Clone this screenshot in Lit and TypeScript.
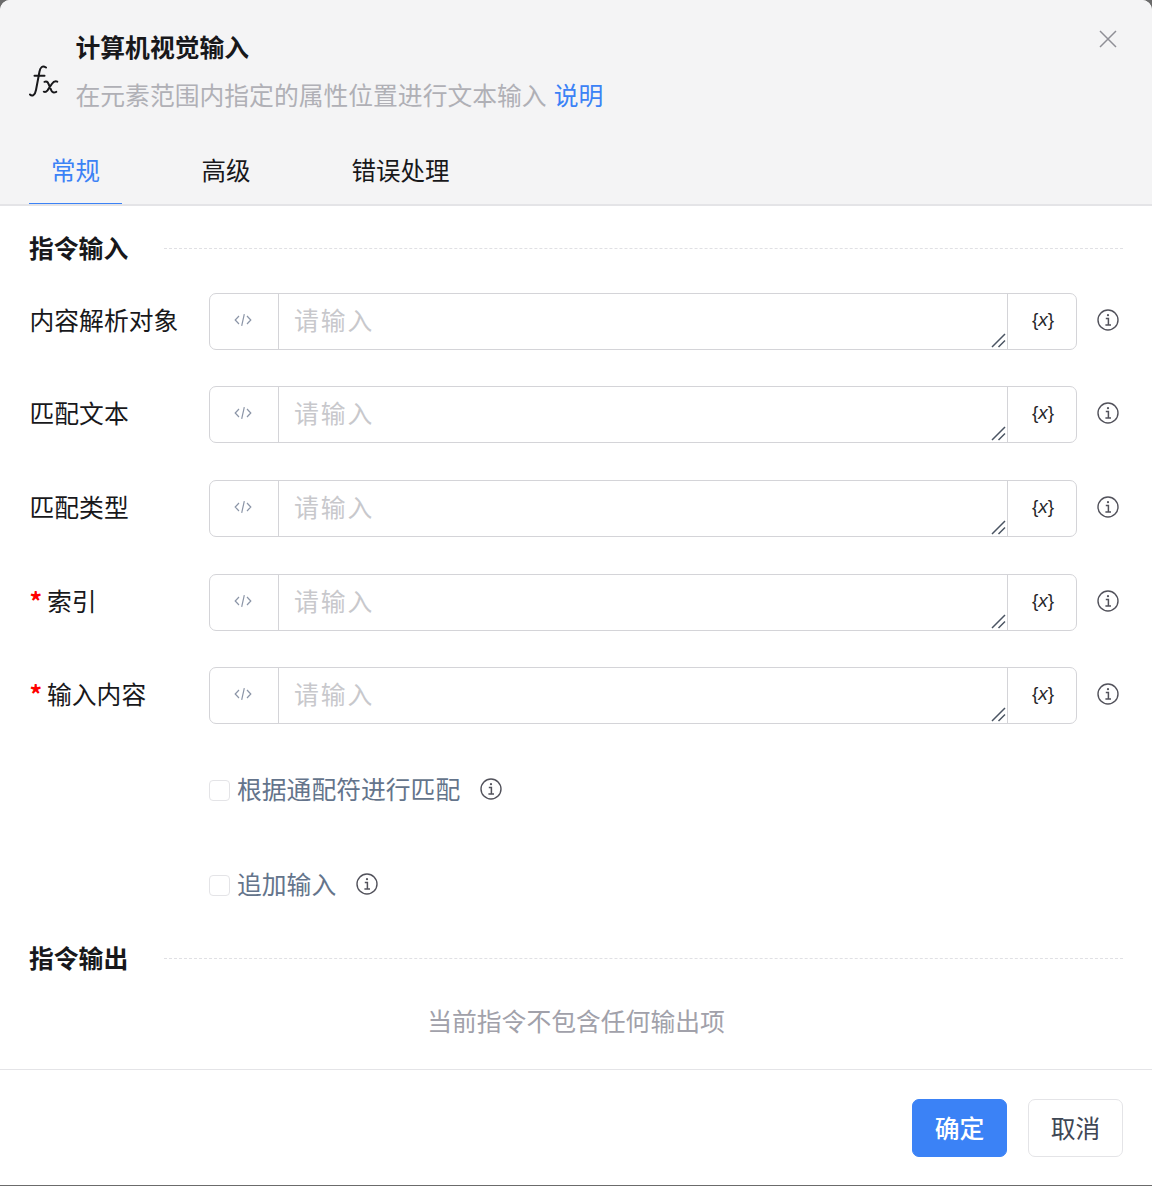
import { LitElement, html, css, svg } from 'lit';
import { customElement } from 'lit/decorators.js';

interface Field {
  label: string;
  required?: boolean;
}

const FIELDS: Field[] = [
  { label: '内容解析对象' },
  { label: '匹配文本' },
  { label: '匹配类型' },
  { label: '索引', required: true },
  { label: '输入内容', required: true },
];

const infoIcon = svg`<svg class="info" viewBox="0 0 22 22" fill="none" stroke="#52525b">
  <circle cx="11" cy="11" r="10" stroke-width="1.4"></circle>
  <path d="M8.8 9.4h2.600v6.600M8.400 16.100h5.600" stroke-width="1.5"></path>
  <circle cx="11" cy="6.200" r="1.100" fill="#52525b" stroke="none"></circle>
</svg>`;

@customElement('app-root')
export class AppRoot extends LitElement {
  private renderField(f: Field) {
    return html`
      <div class="row">
        <label class="label">${f.required ? html`<span class="star">*</span>` : ''}${f.label}</label>
        <div class="input">
          <div class="addon left">
            <svg viewBox="0 0 18 14" width="18" height="14" fill="none" stroke="#8b95a7" stroke-width="1.2">
              <path d="M5 3 1.200 7 5 11M13 3l3.800 4-3.800 4M10.300 1.200 7.700 12.800"></path>
            </svg>
          </div>
          <div class="field">
            <span class="placeholder">请输入</span>
            <svg class="grip" viewBox="0 0 15 15" width="15" height="15" stroke="#4b5563" stroke-width="1.5">
              <path d="M1 14 14 1M7.500 14 14 7.500"></path>
            </svg>
          </div>
          <div class="addon right"><span class="var">{<i>x</i>}</span></div>
        </div>
        <div class="tip">${infoIcon}</div>
      </div>
    `;
  }

  render() {
    return html`
      <div class="dialog">
        <header class="head">
          <div class="title-row">
            <svg class="fx" viewBox="0 0 30 32" width="30" height="32" fill="none" stroke="#18181b" stroke-width="2" stroke-linecap="round">
              <path d="M17 2.500C13.500.4 11.400 2 10.500 6.500L7 25C6 30.500 3 31.500 1 29.500"></path>
              <path d="M5.500 10.800H15.500"></path>
              <path d="M15.500 16.800c1.900-.8 3.200 0 4 2l2.800 6.600c.8 2 2.300 2.600 5 1.400M28.300 16.600c-2.300-.9-4 .2-5.500 2.400L18.500 25.300c-1.100 1.500-2.300 2.100-3.700 1.400"></path>
            </svg>
            <div class="titles">
              <div class="title">计算机视觉输入</div>
              <div class="desc">在元素范围内指定的属性位置进行文本输入 <a>说明</a></div>
            </div>
            <svg class="close" viewBox="0 0 18 18" width="18" height="18" stroke="#8f8f96" stroke-width="1.5">
              <path d="M1 1l16 16M17 1 1 17"></path>
            </svg>
          </div>
          <nav class="tabs">
            <div class="tab active">常规</div>
            <div class="tab second">高级</div>
            <div class="tab third">错误处理</div>
          </nav>
        </header>
        <main class="body">
          <div class="section"><span>指令输入</span><div class="dash"></div></div>
          <div class="rows">${FIELDS.map((f) => this.renderField(f))}</div>
          <div class="check first">
            <span class="box"></span><span class="check-label">根据通配符进行匹配</span>${infoIcon}
          </div>
          <div class="check second-check">
            <span class="box"></span><span class="check-label">追加输入</span>${infoIcon}
          </div>
          <div class="section out"><span>指令输出</span><div class="dash"></div></div>
          <div class="empty">当前指令不包含任何输出项</div>
        </main>
        <footer class="foot">
          <button class="btn primary">确定</button>
          <button class="btn">取消</button>
        </footer>
      </div>
    `;
  }

  static styles = css`
    :host {
      display: block;
      width: 1152px;
      height: 1186px;
      background: #6b6b6b;
      font-family: 'Noto Sans CJK SC', 'Liberation Sans', sans-serif;
      font-size: 24.8px;
      color: #18181b;
    }
    .dialog {
      height: 1185px;
      display: flex;
      flex-direction: column;
      background: #fff;
      border-radius: 10px 10px 0 0;
      overflow: hidden;
    }
    .head {
      height: 206px;
      box-sizing: border-box;
      background: #f4f4f5;
      border-bottom: 2px solid #e4e4e7;
      display: flex;
      flex-direction: column;
      flex: none;
    }
    .title-row {
      display: flex;
      align-items: flex-start;
      padding: 30px 35px 0 29px;
      height: 100px;
    }
    .fx {
      flex: none;
      margin-top: 35px;
      margin-right: 16.5px;
    }
    .titles {
      flex: 1;
    }
    .title {
      font-weight: 700;
      line-height: 36px;
      margin-top: -2px;
    }
    .desc {
      margin-top: 12px;
      line-height: 36px;
      color: #b0b0b6;
    }
    .desc a {
      color: #3b82f6;
      margin-left: 1.5px;
    }
    .tabs {
      display: flex;
      margin-top: auto;
      padding-left: 29px;
      height: 73px;
      box-sizing: border-box;
      font-size: 24.5px;
    }
    .tab {
      line-height: 36px;
      padding-top: 20.6px;
      box-sizing: border-box;
    }
    .tab.active {
      width: 93px;
      text-align: center;
      color: #3b82f6;
      border-bottom: 1.5px solid #3b82f6;
    }
    .second {
      margin-left: 79.5px;
    }
    .third {
      margin-left: 101px;
    }
    .body {
      flex: 1;
      padding: 0 29px;
      min-height: 0;
    }
    .section {
      display: flex;
      align-items: center;
      height: 36px;
      margin-top: 25px;
      font-weight: 700;
    }
    .section > span {
      margin-bottom: 4px;
    }
    .section.out {
      margin-top: 37px;
    }
    .section.out .dash {
      margin-bottom: 0;
    }
    .dash {
      flex: 1;
      margin-left: 36px;
      margin-bottom: 2px;
      border-top: 1px dashed #e0e0e4;
    }
    .rows {
      display: flex;
      flex-direction: column;
      gap: 36.7px;
      margin-top: 25.6px;
    }
    .row {
      display: flex;
      align-items: center;
      height: 57px;
    }
    .label {
      width: 180px;
      flex: none;
      line-height: 36px;
      margin-bottom: 5px;
      padding-left: 0.5px;
      box-sizing: border-box;
      white-space: nowrap;
    }
    .star {
      display: inline-block;
      width: 17.5px;
      color: #f00;
      font-weight: 700;
    }
    .input {
      width: 868px;
      height: 57px;
      box-sizing: border-box;
      display: flex;
      border: 1.5px solid #d4d4d8;
      border-radius: 7px;
      flex: none;
    }
    .addon {
      flex: none;
      display: flex;
      align-items: center;
      justify-content: center;
      padding-bottom: 3px;
      box-sizing: border-box;
    }
    .addon.left {
      width: 69px;
      border-right: 1.5px solid #d4d4d8;
      padding-right: 2px;
    }
    .addon.right {
      width: 69px;
      border-left: 1.5px solid #d4d4d8;
      padding-left: 2px;
    }
    .var {
      font-family: 'Liberation Sans', sans-serif;
      font-size: 19px;
      color: #27272a;
      line-height: 1;
      margin-bottom: 1px;
    }
    .field {
      flex: 1;
      position: relative;
      display: flex;
      align-items: center;
      padding-left: 15px;
    }
    .placeholder {
      color: #c8c8cc;
      letter-spacing: 2px;
      margin-bottom: 5px;
    }
    .grip {
      position: absolute;
      right: 1px;
      bottom: 1px;
    }
    .tip {
      margin-left: 20px;
      display: flex;
      margin-bottom: 3px;
    }
    .info {
      width: 22px;
      height: 22px;
      flex: none;
    }
    .check {
      display: flex;
      align-items: center;
      height: 36px;
      margin-left: 180px;
    }
    .check.first {
      margin-top: 48.4px;
    }
    .check.second-check {
      margin-top: 59px;
    }
    .check .info {
      margin-bottom: 4px;
    }
    .box {
      width: 21px;
      height: 21px;
      box-sizing: border-box;
      border: 1.5px solid #e4e4e7;
      border-radius: 4px;
      margin-right: 7px;
    }
    .check-label {
      color: #64748b;
      margin-right: 20px;
      margin-bottom: 6px;
    }
    .empty {
      text-align: center;
      color: #a1a1aa;
      line-height: 36px;
      margin-top: 25px;
    }
    .foot {
      flex: none;
      height: 116px;
      box-sizing: border-box;
      border-top: 1.5px solid #e4e4e7;
      display: flex;
      justify-content: flex-end;
      align-items: center;
      gap: 21px;
      padding: 0 29px;
    }
    .btn {
      width: 95px;
      height: 58px;
      border: 1.5px solid #e4e4e7;
      border-radius: 7px;
      background: #fff;
      color: #3f4754;
      font: inherit;
      padding: 0 0 2px;
    }
    .btn.primary {
      background: #3b82f6;
      border-color: #3b82f6;
      color: #fff;
      font-weight: 500;
    }
  `;
}

declare global {
  interface HTMLElementTagNameMap {
    'app-root': AppRoot;
  }
}
